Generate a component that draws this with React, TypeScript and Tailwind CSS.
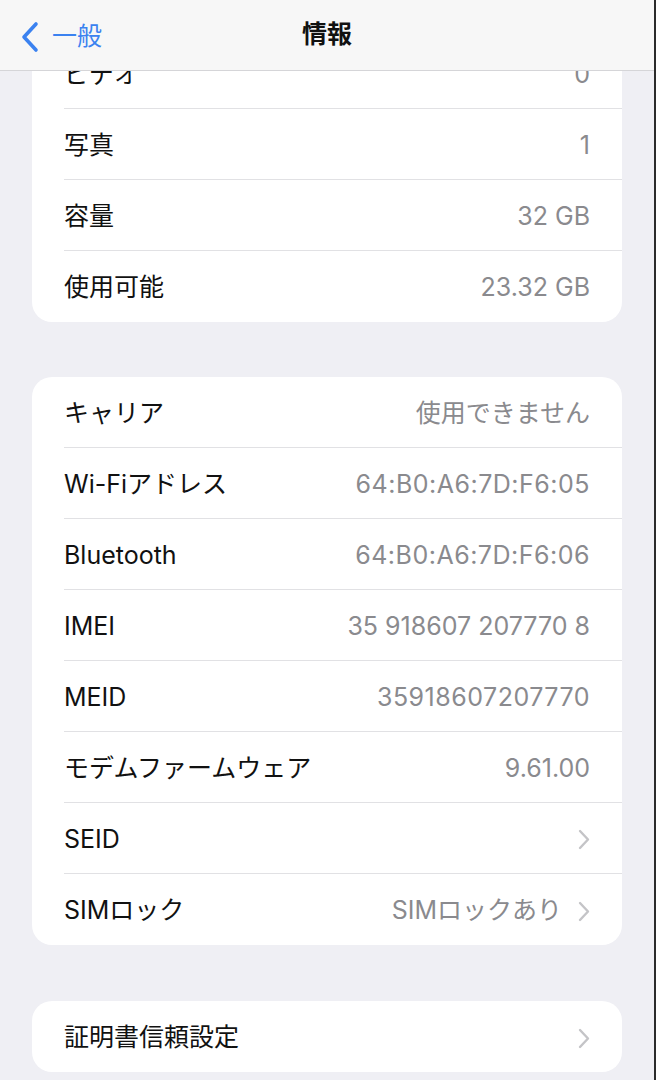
import React from "react";

const font = { fontFamily: 'Inter, "Noto Sans CJK JP", sans-serif' };

function Chevron() {
  return (
    <svg width="12" height="21" viewBox="0 0 12 21" className="ml-[16px] shrink-0">
      <path d="M2 2 L10 10.5 L2 19" fill="none" stroke="#c4c4c7" strokeWidth="2.4" strokeLinecap="round" strokeLinejoin="round" />
    </svg>
  );
}

type Row = { label: string; value?: string; chevron?: boolean; wide?: boolean };

function Card({ rows }: { rows: Row[] }) {
  return (
    <div className="mx-[32px] rounded-[20px] bg-white">
      {rows.map((r, i) => (
        <div key={i} className="pl-[32px]">
          <div
            className={
              "flex h-[71px] items-center justify-between pr-[32px] pt-[3px] " +
              (i < rows.length - 1 ? "border-b border-[#e1e1e4]" : "")
            }
          >
            <span className="text-[25px] text-[#111111]">{r.label}</span>
            <div className="flex items-center">
              {r.value && (
                <span className={"text-[25px] text-[#8a8a8e] " + (r.wide ? "tracking-[0.5px]" : "")}>{r.value}</span>
              )}
              {r.chevron && <Chevron />}
            </div>
          </div>
        </div>
      ))}
    </div>
  );
}

export default function App() {
  return (
    <div className="relative h-[1080px] w-full overflow-hidden bg-[#efeff4] border-r-2 border-[#2b2b2b]" style={font}>
      <div className="absolute left-0 right-0 top-0 z-10 flex h-[71px] items-center justify-center border-b border-[#d5d5d8] bg-[#f7f7f7]">
        <div className="absolute left-[20px] top-[18px] flex items-center">
          <svg width="20" height="32" viewBox="0 0 20 32">
            <path d="M16 3 L4 16 L16 29" fill="none" stroke="#3b82f0" strokeWidth="3.6" strokeLinecap="round" strokeLinejoin="round" />
          </svg>
          <span className="ml-[12px] text-[25px] text-[#3b82f0]">一般</span>
        </div>
        <span className="text-[25px] font-bold text-[#111111]">情報</span>
      </div>
      <div className="pt-[38px]">
        <Card
          rows={[
            { label: "ビデオ", value: "0" },
            { label: "写真", value: "1" },
            { label: "容量", value: "32 GB" },
            { label: "使用可能", value: "23.32 GB" },
          ]}
        />
        <div className="h-[55px]" />
        <Card
          rows={[
            { label: "キャリア", value: "使用できません" },
            { label: "Wi-Fiアドレス", value: "64:B0:A6:7D:F6:05", wide: true },
            { label: "Bluetooth", value: "64:B0:A6:7D:F6:06", wide: true },
            { label: "IMEI", value: "35 918607 207770 8" },
            { label: "MEID", value: "35918607207770", wide: true },
            { label: "モデムファームウェア", value: "9.61.00" },
            { label: "SEID", chevron: true },
            { label: "SIMロック", value: "SIMロックあり", chevron: true },
          ]}
        />
        <div className="h-[56px]" />
        <Card rows={[{ label: "証明書信頼設定", chevron: true }]} />
      </div>
    </div>
  );
}
